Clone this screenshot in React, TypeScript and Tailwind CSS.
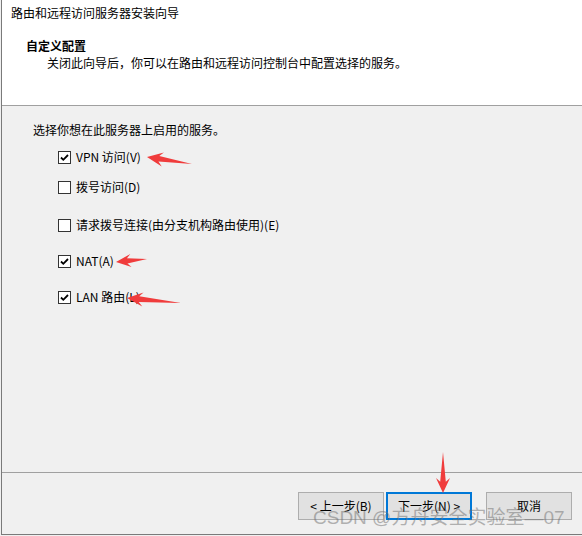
import React from "react";

const font = { fontFamily: '"Microsoft YaHei", "Noto Sans CJK SC", "Noto Sans", sans-serif' };

function Check({ checked }: { checked: boolean }) {
  return (
    <div className="w-[13px] h-[13px] border border-[#333333] bg-white flex items-center justify-center shrink-0">
      {checked && (
        <svg width="9" height="9" viewBox="0 0 9 9">
          <path d="M1 4.5 L3.3 6.8 L8 2" stroke="#000" strokeWidth="1.8" fill="none" />
        </svg>
      )}
    </div>
  );
}

function Row({ checked, label, className }: { checked: boolean; label: string; className: string }) {
  return (
    <div className={"flex items-center h-[16px] pl-[56px] " + className}>
      <Check checked={checked} />
      <span className="ml-[5px] text-[12px] leading-[16px] text-black">{label}</span>
    </div>
  );
}

function arrowPoints(tx: number, ty: number, ex: number, ey: number, hl: number, hw: number) {
  const len = Math.hypot(ex - tx, ey - ty);
  const dx = (ex - tx) / len;
  const dy = (ey - ty) / len;
  const nx = -dy;
  const ny = dx;
  const p = (a: number, b: number) => `${tx + dx * a + nx * b},${ty + dy * a + ny * b}`;
  return [
    `${tx},${ty}`,
    p(hl, hw),
    p(hl * 0.75, hw * 0.4),
    `${ex},${ey}`,
    p(hl * 0.75, -hw * 0.4),
    p(hl, -hw),
  ].join(" ");
}

export default function App() {
  return (
    <div className="relative w-[582px] h-[536px] bg-[#f0f0f0] pl-[1px]" style={font}>
      <div className="h-[535px] border-l border-b border-[#7a7a7a] flex flex-col">
        <div className="h-[106px] bg-white border-b border-[#a0a0a0] shrink-0 pt-[5px]">
          <div className="pl-[9px] text-[12px] leading-[16px] text-black">路由和远程访问服务器安装向导</div>
          <div className="pl-[24px] mt-[17px] text-[12px] leading-[16px] font-bold text-black">自定义配置</div>
          <div className="pl-[45px] mt-[1px] text-[12px] leading-[16px] text-black">
            关闭此向导后，你可以在路由和远程访问控制台中配置选择的服务。
          </div>
        </div>
        <div className="flex-1 border-b border-[#a0a0a0] pt-[16px]">
          <div className="pl-[31px] text-[12px] leading-[16px] text-black">选择你想在此服务器上启用的服务。</div>
          <Row checked label="VPN 访问(V)" className="mt-[11px]" />
          <Row checked={false} label="拨号访问(D)" className="mt-[14px]" />
          <Row checked={false} label="请求拨号连接(由分支机构路由使用)(E)" className="mt-[22px]" />
          <Row checked label="NAT(A)" className="mt-[20px]" />
          <Row checked label="LAN 路由(L)" className="mt-[20px]" />
        </div>
        <div className="h-[61px] shrink-0 flex justify-end items-start pt-[19px] pr-[10px]">
          <button className="w-[86px] h-[28px] bg-[#e1e1e1] border border-[#adadad] text-[12px] text-black">&lt; 上一步(B)</button>
          <button className="ml-[2px] w-[86px] h-[28px] bg-[#e1e1e1] border-2 border-[#0078d7] text-[12px] text-black">下一步(N) &gt;</button>
          <button className="ml-[14px] w-[86px] h-[28px] bg-[#e1e1e1] border border-[#adadad] text-[12px] text-black">取消</button>
        </div>
      </div>

      <svg className="absolute inset-0 pointer-events-none" width="582" height="536">
        <polygon points={arrowPoints(147, 157, 192, 164, 16, 7)} fill="#f03c3c" />
        <polygon points={arrowPoints(116, 262, 147, 259, 15, 6.5)} fill="#f03c3c" />
        <polygon points={arrowPoints(127, 298, 181, 303, 16, 7)} fill="#f03c3c" />
        <polygon points={arrowPoints(443, 493, 443, 452, 15, 7)} fill="#f03c3c" />
      </svg>

      <div
        className="absolute left-[313px] top-[506px] text-[19px] leading-[24px] text-[rgba(110,110,110,0.5)] whitespace-nowrap"
        style={{ fontFamily: '"Liberation Sans", "Noto Sans CJK SC", sans-serif' }}
      >
        CSDN @方舟安全实验室—07
      </div>
    </div>
  );
}
